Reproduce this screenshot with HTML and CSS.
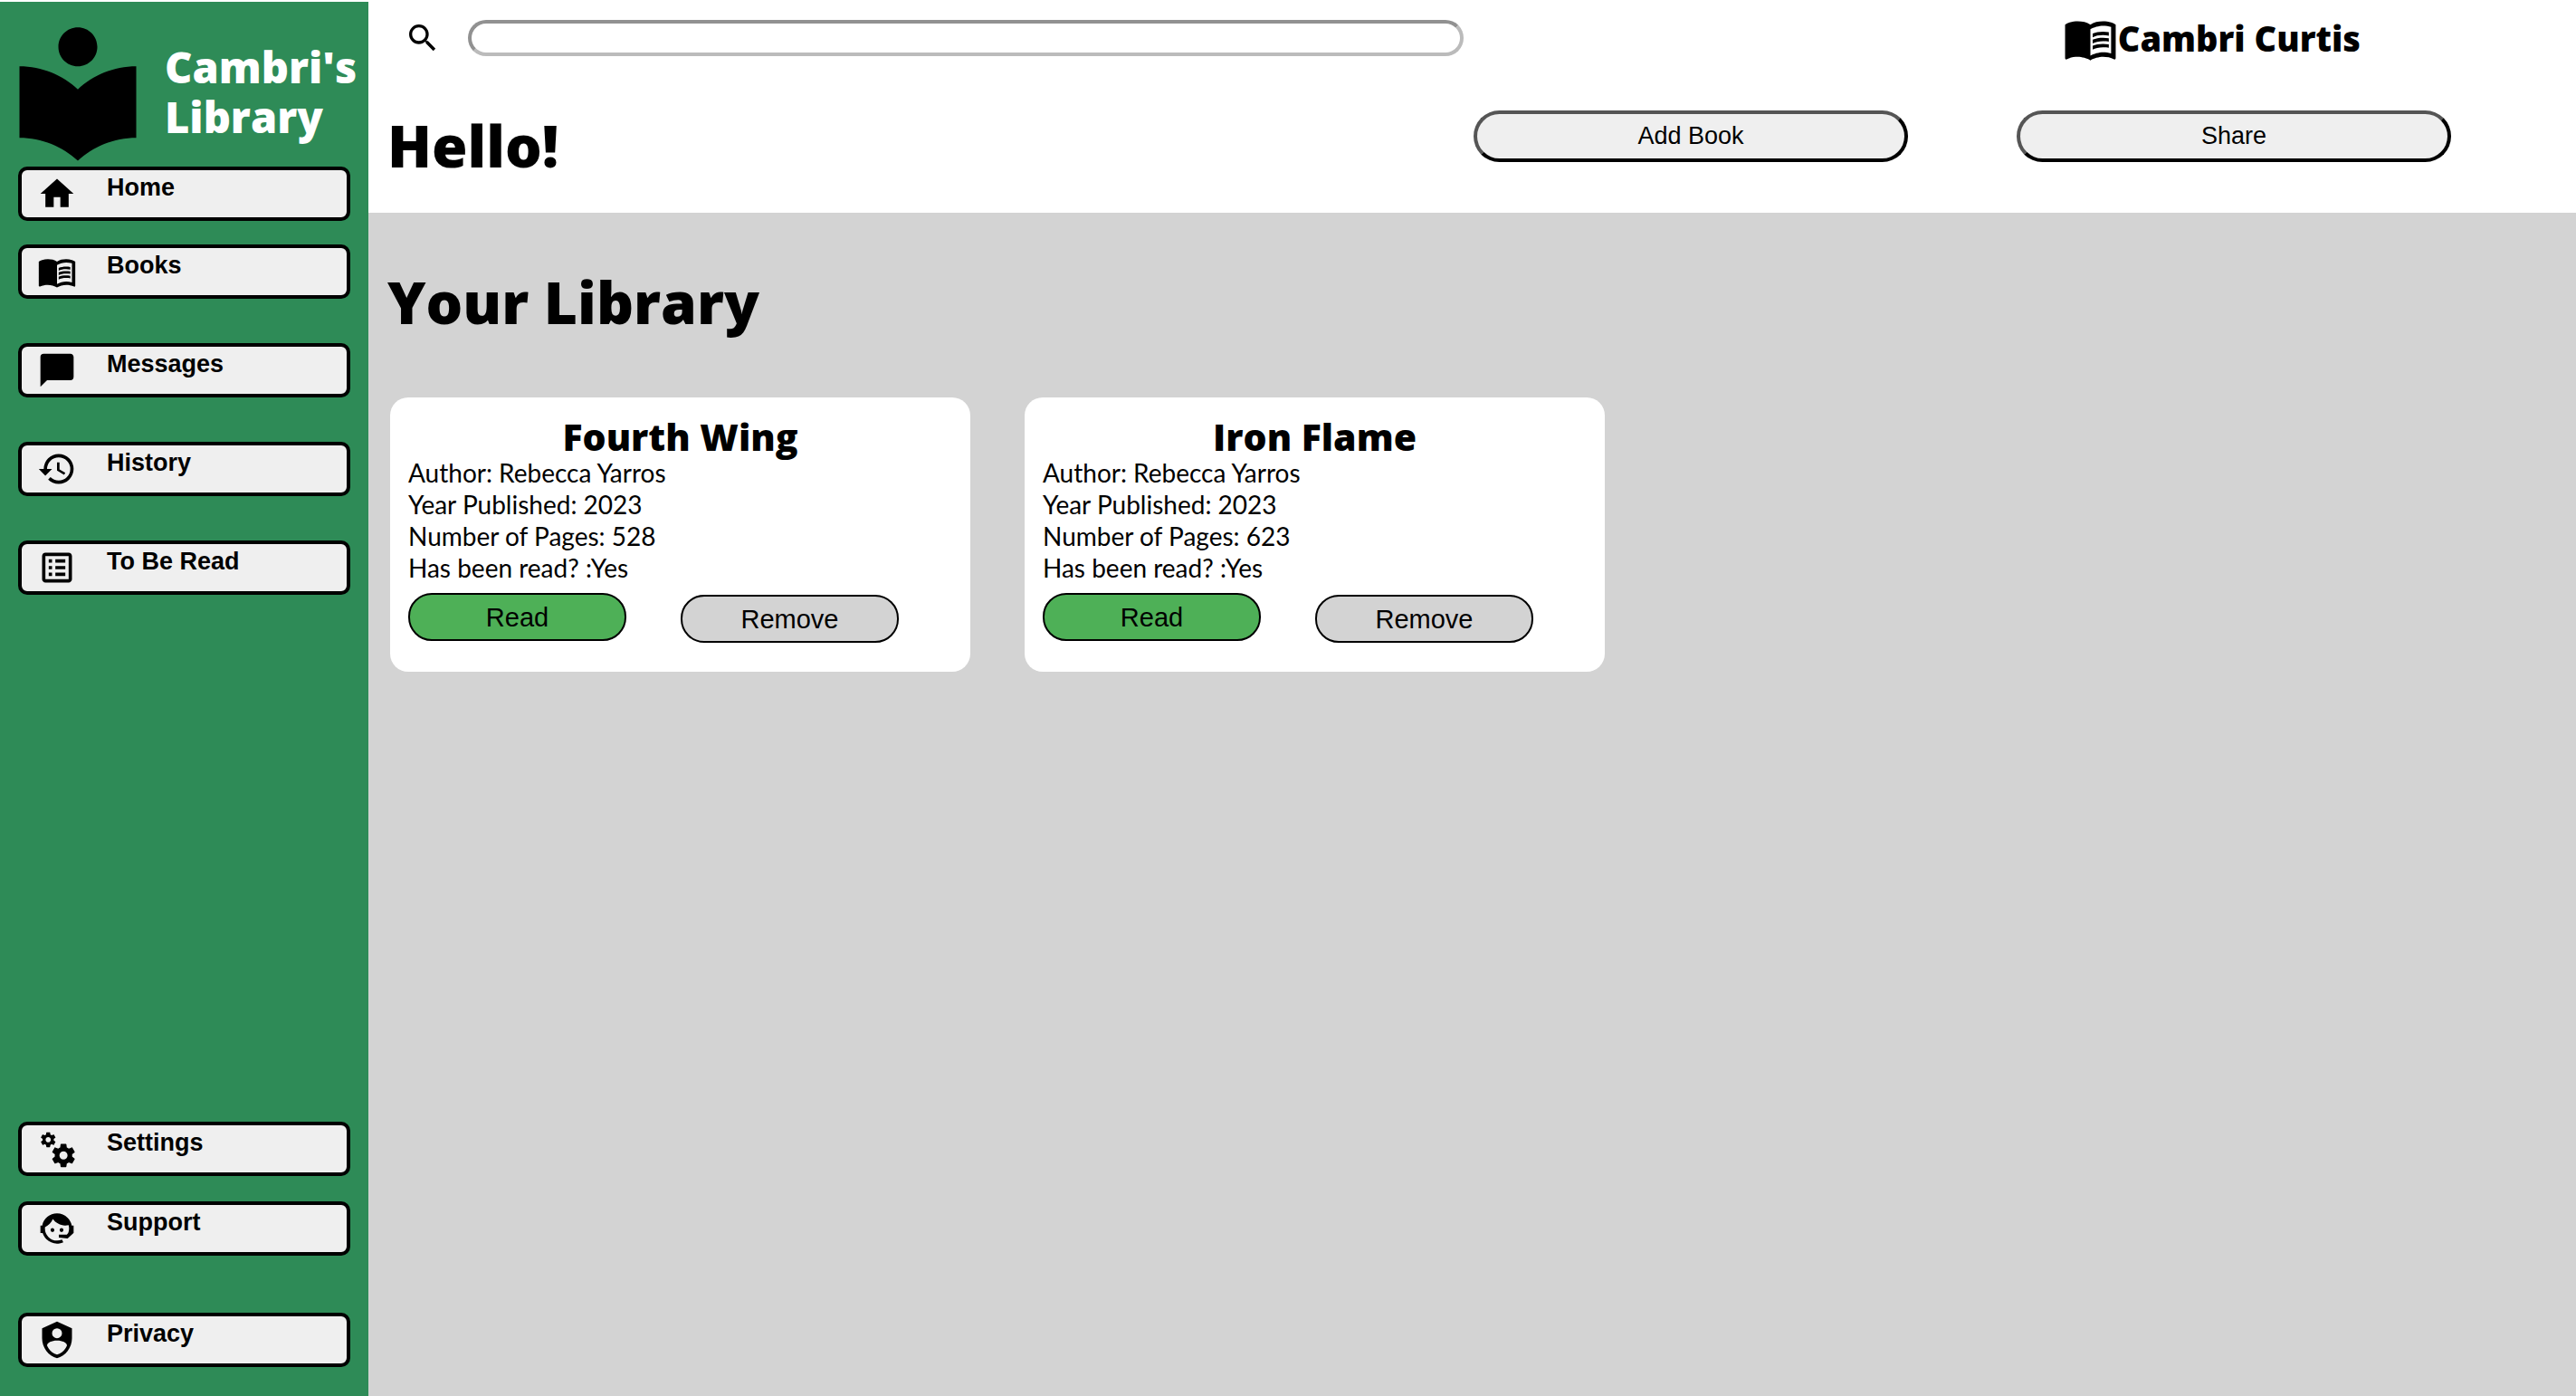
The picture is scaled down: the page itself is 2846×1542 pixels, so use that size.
FILE: index.html
```html
<!DOCTYPE html>
<html lang="en">
<head>
<meta charset="utf-8">
<title>Cambri's Library</title>
<link rel="stylesheet" href="styles.css">
</head>
<body>
<svg class="sprite" aria-hidden="true">
  <symbol id="open-book" viewBox="0 0 24 24"><path d="M12 21.5C10.65 20.65 8.2 20 6.5 20 4.85 20 3.15 20.3 1.75 21.05 1.65 21.1 1.6 21.1 1.5 21.1 1.25 21.1 1 20.85 1 20.6V6C1.6 5.55 2.25 5.25 3 5 4.11 4.65 5.33 4.5 6.5 4.5 8.45 4.5 10.55 4.9 12 6 13.45 4.9 15.55 4.5 17.5 4.5 18.67 4.5 19.89 4.65 21 5 21.75 5.25 22.4 5.55 23 6V20.6C23 20.85 22.75 21.1 22.5 21.1 22.4 21.1 22.35 21.1 22.25 21.05 20.85 20.3 19.15 20 17.5 20 15.8 20 13.35 20.65 12 21.5M12 8V19.5C13.35 18.65 15.8 18 17.5 18 18.7 18 19.9 18.15 21 18.5V7C19.9 6.65 18.7 6.5 17.5 6.5 15.8 6.5 13.35 7.15 12 8M13 11.5C14.11 10.82 15.6 10.5 17.5 10.5 18.41 10.5 19.26 10.59 20 10.78V9.23C19.13 9.08 18.29 9 17.5 9 15.73 9 14.23 9.28 13 9.84V11.5M17.5 11.67C15.79 11.67 14.29 11.93 13 12.46V14.15C14.11 13.5 15.6 13.16 17.5 13.16 18.54 13.16 19.38 13.24 20 13.4V11.9C19.13 11.74 18.29 11.67 17.5 11.67M20 14.57C19.13 14.41 18.29 14.33 17.5 14.33 15.67 14.33 14.17 14.6 13 15.13V16.82C14.11 16.16 15.6 15.83 17.5 15.83 18.54 15.83 19.38 15.91 20 16.07V14.57Z"/></symbol>
</svg>
<div class="app">
  <aside class="sidebar">
    <div class="brand">
      <svg class="logo" viewBox="0 0 24 24" aria-hidden="true"><path d="M12 11.55C9.64 9.35 6.48 8 3 8v11c3.48 0 6.64 1.35 9 3.55 2.36-2.19 5.52-3.55 9-3.55V8c-3.48 0-6.64 1.35-9 3.55zM12 8c1.66 0 3-1.34 3-3s-1.34-3-3-3-3 1.34-3 3 1.34 3 3 3z"/></svg>
      <h1 class="brand-name">Cambri's Library</h1>
    </div>
    <nav class="nav">
      <div class="nav-main">
        <button class="nav-button home" type="button"><svg viewBox="0 0 24 24" aria-hidden="true"><path d="M10 20V14H14V20H19V12H22L12 3 2 12H5V20H10Z"/></svg><span>Home</span></button>
        <button class="nav-button" type="button"><svg viewBox="0 0 24 24" aria-hidden="true"><use href="#open-book"/></svg><span>Books</span></button>
        <button class="nav-button" type="button"><svg viewBox="0 0 24 24" aria-hidden="true"><path d="M20 2H4A2 2 0 0 0 2 4V22L6 18H20A2 2 0 0 0 22 16V4C22 2.89 21.1 2 20 2Z"/></svg><span>Messages</span></button>
        <button class="nav-button" type="button"><svg viewBox="0 0 24 24" aria-hidden="true"><path d="M13.5 8H12V13L16.28 15.54 17 14.33 13.5 12.25V8M13 3A9 9 0 0 0 4 12H1L4.96 16.03 9 12H6A7 7 0 0 1 13 5 7 7 0 0 1 20 12 7 7 0 0 1 13 19C11.07 19 9.32 18.21 8.06 16.94L6.64 18.36C8.27 20 10.5 21 13 21A9 9 0 0 0 22 12 9 9 0 0 0 13 3"/></svg><span>History</span></button>
        <button class="nav-button" type="button"><svg viewBox="0 0 24 24" aria-hidden="true"><path d="M11 15H17V17H11V15M9 7H7V9H9V7M11 13H17V11H11V13M11 9H17V7H11V9M9 11H7V13H9V11M21 5V19C21 20.1 20.1 21 19 21H5C3.9 21 3 20.1 3 19V5C3 3.9 3.9 3 5 3H19C20.1 3 21 3.9 21 5M19 5H5V19H19V5M9 15H7V17H9V15Z"/></svg><span>To Be Read</span></button>
      </div>
      <div class="nav-more">
        <button class="nav-button" type="button"><svg viewBox="0 0 24 24" aria-hidden="true"><path d="M15.9,18.45C17.25,18.45 18.35,17.35 18.35,16C18.35,14.65 17.25,13.55 15.9,13.55C14.54,13.55 13.45,14.65 13.45,16C13.45,17.35 14.54,18.45 15.9,18.45M21.1,16.68L22.58,17.84C22.71,17.95 22.75,18.13 22.66,18.29L21.26,20.71C21.17,20.86 21,20.92 20.83,20.86L19.09,20.16C18.73,20.44 18.33,20.67 17.91,20.85L17.64,22.7C17.62,22.87 17.47,23 17.3,23H14.5C14.32,23 14.18,22.87 14.15,22.7L13.89,20.85C13.46,20.67 13.07,20.44 12.71,20.16L10.96,20.86C10.81,20.92 10.62,20.86 10.54,20.71L9.14,18.29C9.05,18.13 9.09,17.95 9.22,17.84L10.7,16.68L10.65,16L10.7,15.31L9.22,14.16C9.09,14.05 9.05,13.86 9.14,13.71L10.54,11.29C10.62,11.13 10.81,11.07 10.96,11.13L12.71,11.84C13.07,11.56 13.46,11.32 13.89,11.15L14.15,9.29C14.18,9.13 14.32,9 14.5,9H17.3C17.47,9 17.62,9.13 17.64,9.29L17.91,11.15C18.33,11.32 18.73,11.56 19.09,11.84L20.83,11.13C21,11.07 21.17,11.13 21.26,11.29L22.66,13.71C22.75,13.86 22.71,14.05 22.58,14.16L21.1,15.31L21.15,16L21.1,16.68M6.69,8.07C7.56,8.07 8.26,7.37 8.26,6.5C8.26,5.63 7.56,4.92 6.69,4.92C5.82,4.92 5.11,5.63 5.11,6.5C5.11,7.37 5.82,8.07 6.69,8.07M10.03,6.94L11,7.68C11.07,7.75 11.09,7.87 11.03,7.97L10.13,9.53C10.08,9.63 9.96,9.67 9.86,9.63L8.74,9.18L8,9.62L7.81,10.81C7.79,10.92 7.7,11 7.59,11H5.79C5.67,11 5.58,10.92 5.56,10.81L5.4,9.62L4.64,9.18L3.52,9.63C3.41,9.67 3.3,9.63 3.24,9.53L2.34,7.97C2.28,7.87 2.31,7.75 2.39,7.68L3.34,6.94L3.31,6.5L3.34,6.06L2.39,5.32C2.31,5.25 2.28,5.13 2.34,5.03L3.24,3.47C3.3,3.37 3.41,3.33 3.52,3.37L4.63,3.82L5.4,3.38L5.56,2.19C5.58,2.08 5.67,2 5.79,2H7.59C7.7,2 7.79,2.08 7.81,2.19L8,3.38L8.74,3.82L9.86,3.37C9.96,3.33 10.08,3.37 10.13,3.47L11.03,5.03C11.09,5.13 11.07,5.25 11,5.32L10.03,6.06L10.06,6.5L10.03,6.94Z"/></svg><span>Settings</span></button>
        <button class="nav-button" type="button"><svg viewBox="0 0 24 24" aria-hidden="true"><path d="M18.72,14.76C19.07,13.91 19.26,13 19.26,12C19.26,11.28 19.15,10.59 18.96,9.95C18.31,10.1 17.63,10.18 16.92,10.18C13.86,10.18 11.15,8.67 9.5,6.34C8.61,8.5 6.91,10.26 4.77,11.22C4.73,11.47 4.73,11.74 4.73,12A7.27,7.27 0 0,0 12,19.27C13.05,19.27 14.06,19.04 14.97,18.63C15.54,19.72 15.8,20.26 15.78,20.26C14.14,20.81 12.87,21.08 12,21.08C9.58,21.08 7.27,20.13 5.57,18.42C4.53,17.38 3.76,16.11 3.33,14.73H2V10.18H3.09C3.93,6.04 7.6,2.92 12,2.92C14.4,2.92 16.71,3.87 18.42,5.58C19.69,6.84 20.54,8.45 20.89,10.18H22V14.73H21.94L18.38,18L13.08,17.4V15.73H17.91L18.72,14.76M9.27,11.77C9.57,11.77 9.86,11.89 10.07,12.11C10.28,12.32 10.4,12.61 10.4,12.91C10.4,13.21 10.28,13.5 10.07,13.71C9.86,13.92 9.57,14.04 9.27,14.04C8.64,14.04 8.13,13.54 8.13,12.91C8.13,12.28 8.64,11.77 9.27,11.77M14.72,11.77C15.35,11.77 15.85,12.28 15.85,12.91C15.85,13.54 15.35,14.04 14.72,14.04C14.09,14.04 13.58,13.54 13.58,12.91A1.14,1.14 0 0,1 14.72,11.77Z"/></svg><span>Support</span></button>
        <button class="nav-button privacy" type="button"><svg viewBox="0 0 24 24" aria-hidden="true"><path d="M12,1L3,5V11C3,16.55 6.84,21.74 12,23C17.16,21.74 21,16.55 21,11V5L12,1M12,5A3,3 0 0,1 15,8A3,3 0 0,1 12,11A3,3 0 0,1 9,8A3,3 0 0,1 12,5M17.13,17C15.92,18.85 14.11,20.24 12,20.92C9.89,20.24 8.08,18.85 6.87,17C6.53,16.5 6.24,16 6,15.47C6,13.82 8.71,12.47 12,12.47C15.29,12.47 18,13.79 18,15.47C17.76,16 17.47,16.5 17.13,17Z"/></svg><span>Privacy</span></button>
      </div>
    </nav>
  </aside>

  <div class="page">
    <header class="header">
      <div class="topbar">
        <label class="search">
          <svg class="search-icon" viewBox="0 0 24 24" role="img" aria-label="Search"><path d="M9.5 3A6.5 6.5 0 0 1 16 9.5C16 11.11 15.41 12.59 14.44 13.73L14.71 14H15.5L20.5 19 19 20.5 14 15.5V14.71L13.73 14.44C12.59 15.41 11.11 16 9.5 16A6.5 6.5 0 0 1 3 9.5 6.5 6.5 0 0 1 9.5 3M9.5 5C7 5 5 7 5 9.5S7 14 9.5 14 14 12 14 9.5 12 5 9.5 5Z"/></svg>
          <input class="search-input" type="text">
        </label>
        <div class="user">
          <svg class="user-icon" viewBox="0 0 24 24" aria-hidden="true"><use href="#open-book"/></svg>
          <span class="user-name">Cambri Curtis</span>
        </div>
      </div>
      <div class="greeting">
        <h2 class="heading">Hello!</h2>
        <div class="header-actions">
          <button class="action" type="button">Add Book</button>
          <button class="action" type="button">Share</button>
        </div>
      </div>
    </header>

    <main class="library">
      <h2 class="heading">Your Library</h2>
      <div class="books">
        <article class="card">
          <h3 class="card-title">Fourth Wing</h3>
          <p>Author: Rebecca Yarros</p>
          <p>Year Published: 2023</p>
          <p>Number of Pages: 528</p>
          <p>Has been read? :Yes</p>
          <div class="card-actions">
            <button class="pill read" type="button">Read</button>
            <button class="pill remove" type="button">Remove</button>
          </div>
        </article>
        <article class="card">
          <h3 class="card-title">Iron Flame</h3>
          <p>Author: Rebecca Yarros</p>
          <p>Year Published: 2023</p>
          <p>Number of Pages: 623</p>
          <p>Has been read? :Yes</p>
          <div class="card-actions">
            <button class="pill read" type="button">Read</button>
            <button class="pill remove" type="button">Remove</button>
          </div>
        </article>
      </div>
    </main>
  </div>
</div>
</body>
</html>
```
FILE: styles.css
```css
*,
*::before,
*::after {
  box-sizing: border-box;
}

body {
  margin: 0;
  padding-top: 2px;
  background: #fff;
  color: #000;
  font-family: "Gill Sans", Lato, sans-serif;
}

h1,
h2,
h3,
p {
  margin: 0;
}

button,
input {
  font-family: Arial, "Liberation Sans", sans-serif;
  color: #000;
}

.sprite {
  display: none;
}

.app {
  display: grid;
  grid-template-columns: 407px 1fr;
  min-height: calc(100vh - 2px);
}

.brand-name,
.user-name,
.heading,
.card-title {
  font-family: "Gill Sans", "Open Sans", sans-serif;
  font-weight: 800;
}

/* Sidebar */
.sidebar {
  display: flex;
  flex-direction: column;
  background: #2e8b57;
}

.brand {
  display: flex;
  height: 182px;
  padding-top: 14px;
}

.logo {
  flex: none;
  width: 172px;
  height: 172px;
}

.brand-name {
  padding: 31px 0 0 10px;
  color: #fff;
  font-size: 47px;
  line-height: 55px;
}

.nav {
  display: flex;
  flex: 1;
  flex-direction: column;
  justify-content: space-between;
  padding: 0 20px 32px;
}

.nav-main,
.nav-more {
  display: flex;
  flex-direction: column;
}

.nav-main {
  gap: 49px;
}

.nav-more {
  gap: 28px;
}

.nav-button {
  display: flex;
  align-items: center;
  gap: 33px;
  height: 60px;
  padding: 0 17px;
  border: 4px solid #000;
  border-radius: 10px;
  background: #efefef;
  font-size: 27px;
  font-weight: 700;
  line-height: 30px;
}

.nav-button svg {
  width: 44px;
  height: 44px;
}

.nav-button span {
  padding-bottom: 14px;
}

.home {
  margin-bottom: -23px;
}

.privacy {
  margin-top: 35px;
}

/* Header */
.page {
  display: flex;
  flex-direction: column;
}

.header {
  padding: 9px 0 35px;
}

.topbar {
  display: grid;
  grid-template-columns: 1210px 1fr;
  align-items: center;
  height: 62px;
}

.search {
  display: flex;
  align-items: center;
  gap: 30px;
  padding-left: 40px;
}

.search-icon {
  flex: none;
  width: 40px;
  height: 40px;
}

.search-input {
  flex: 1;
  height: 40px;
  padding: 0 16px;
  border: 4px solid;
  border-color: #919191 #bbb #bbb #919191;
  border-radius: 20px;
  background: #fff;
  font-size: 27px;
}

.user {
  display: flex;
  align-items: center;
  justify-self: end;
  padding-right: 238px;
}

.user-icon {
  width: 61px;
  height: 61px;
}

.user-name {
  font-size: 38px;
}

.greeting {
  display: flex;
  justify-content: space-between;
  padding: 49px 138px 0 21px;
}

.heading {
  font-size: 64px;
  line-height: 78px;
}

.header-actions {
  display: flex;
  gap: 120px;
}

.action {
  width: 480px;
  height: 57px;
  border: 4px solid;
  border-color: #555 #000 #000 #555;
  border-radius: 29px;
  background: #efefef;
  font-size: 27px;
}

/* Library */
.library {
  flex: 1;
  padding: 60px 21px;
  background: #d3d3d3;
}

.books {
  display: grid;
  grid-template-columns: repeat(auto-fill, 641px);
  gap: 60px;
  padding: 66px 3px 0;
}

.card {
  padding: 20px 20px 32px;
  border-radius: 20px;
  background: #fff;
  font-size: 28px;
  line-height: 35px;
}

.card-title {
  font-size: 41px;
  line-height: 46px;
  text-align: center;
}

.card-actions {
  display: flex;
  gap: 60px;
  padding-top: 10px;
}

.pill {
  width: 241px;
  height: 53px;
  padding-top: 3px;
  border: 2px solid #000;
  border-radius: 26px;
  font-size: 29px;
}

.read {
  background: #4eb057;
}

.remove {
  margin-top: 2px;
  background: #d3d3d3;
}
```
